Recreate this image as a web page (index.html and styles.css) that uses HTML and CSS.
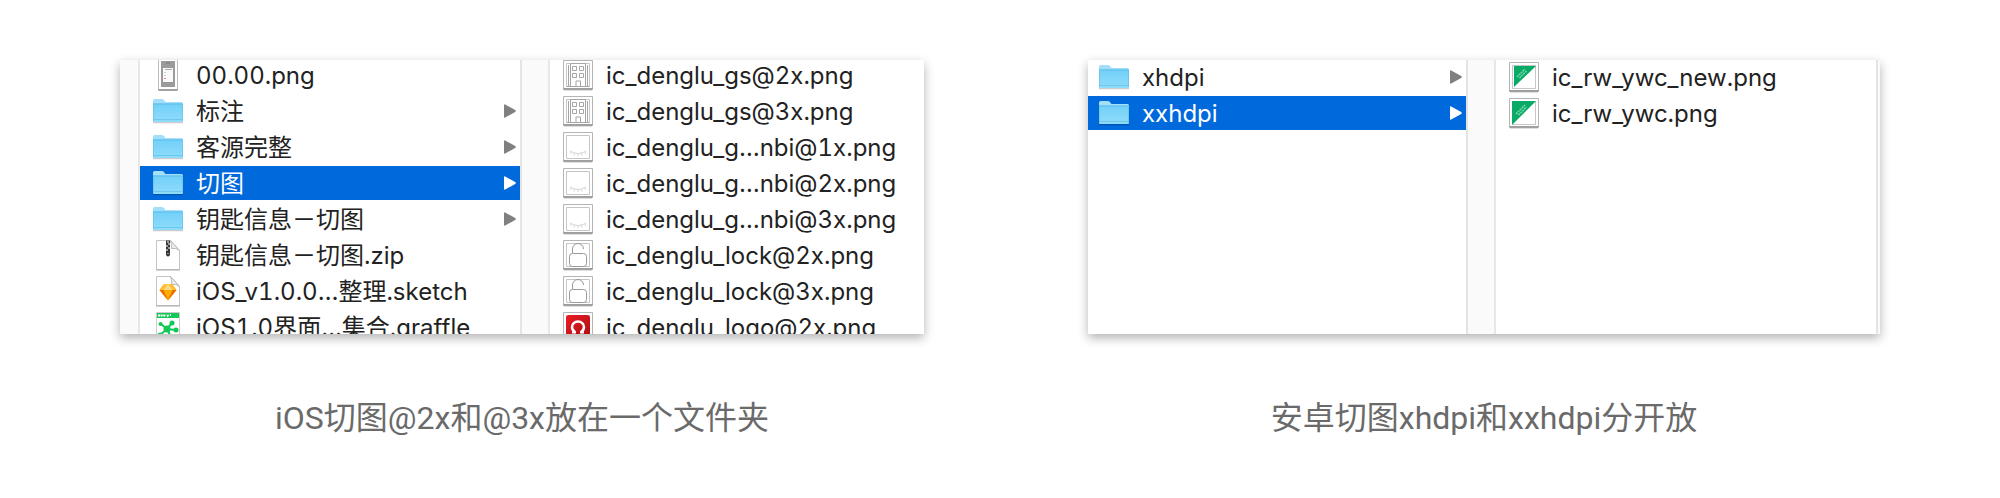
FILE: index.html
```html
<!DOCTYPE html>
<html lang="zh-CN">
<head>
    <meta charset="UTF-8">
    <title>切图</title>
    <link rel="stylesheet" href="styles.css">
</head>
<body>
<!-- icons -->
<svg class="sprite" aria-hidden="true">
    <defs>
        <linearGradient id="folderFill" x1="0" y1="0" x2="0" y2="1">
            <stop offset="0" stop-color="#72d0f8"/>
            <stop offset="1" stop-color="#8fdcfb"/>
        </linearGradient>
        <linearGradient id="redFill" x1="0" y1="0" x2="1" y2="1">
            <stop offset="0" stop-color="#ec1c24"/>
            <stop offset="1" stop-color="#a80f14"/>
        </linearGradient>
        <clipPath id="ribbon"><path d="M4 4h24L4 28z"/></clipPath>
    </defs>
    <symbol id="folder" viewBox="0 0 32 32">
        <path d="M1 27.500h30" stroke="#000" stroke-opacity=".2" stroke-width="1.500"/>
        <path d="M1 5.500Q1 4 2.500 4H10q1 0 1.700.8L13.500 7H29.500Q31 7 31 8.500V12H1z" fill="#a3dffa"/>
        <path d="M1 9.500Q1 8.500 2 8.500H30Q31 8.500 31 9.500V26Q31 27 30 27H2Q1 27 1 26z" fill="url(#folderFill)"/>
        <path d="M1.500 9h29" stroke="#5bbde8" stroke-width="1"/>
        <path d="M1.500 24.500h29" stroke="#67bfe3" stroke-width="1" opacity=".7"/>
        <path d="M1.500 8v18M30.500 9v17" stroke="#64bfe6" stroke-width="1" opacity=".6"/>
    </symbol>
    <symbol id="page" viewBox="0 0 32 32">
        <path d="M4.500 1.500H18.500L27.500 11.500V30.500H4.500z" fill="#fff" stroke="#c4c4c4"/>
        <path d="M4 31h24" stroke="#aaa"/>
        <path d="M18.500 1.500Q20.500 7 19.500 9.500Q24 8.500 27.500 11.500z" fill="#eee" stroke="#bbb"/>
    </symbol>
    <symbol id="zip" viewBox="0 0 32 32">
        <use href="#page"/>
        <path d="M14 1.500h4v13q0 3-2 3t-2-3z" fill="#333"/>
        <path d="M15 3h2M16 5h2M14 7h2M16 9h2M14 11h2M15.500 14.500h1" stroke="#fff"/>
    </symbol>
    <symbol id="sketch" viewBox="0 0 32 32">
        <use href="#page"/>
        <path d="M11.500 9.500h9L24.500 15 16 25.500 7.500 15z" fill="#fdad00"/>
        <path d="M11.500 9.500L16 9l4.500.5L24.500 15h-17z" fill="#fdbf2d"/>
        <path d="M16 9l4.500 6h-9z" fill="#fed98a"/>
        <path d="M7.500 15h4L16 25.500zM24.500 15h-4L16 25.500z" fill="#ea6c00"/>
    </symbol>
    <symbol id="graffle" viewBox="0 0 32 32">
        <path d="M4.500 1.500h23v30h-23z" fill="#fff" stroke="#ccc"/>
        <path d="M5 2h22v5H5z" fill="#12c957"/>
        <path d="M6 4.500h8M15 5.500l2-2M18 4h1" stroke="#fff" stroke-width="2" stroke-dasharray="2 .6"/>
        <path d="M15 18L9 13M15 18l5-6M15 18l9 1M15 18l-7 6M15 18l4 8" stroke="#12c957" stroke-width="2"/>
        <circle cx="15" cy="18" r="3.500" fill="#12c957"/>
        <circle cx="8.500" cy="13" r="2" fill="#12c957"/>
        <circle cx="20" cy="12" r="2.500" fill="#12c957"/>
        <circle cx="24" cy="19" r="2.500" fill="#12c957"/>
        <circle cx="8" cy="24" r="2.500" fill="#12c957"/>
        <circle cx="19" cy="26" r="2" fill="#12c957"/>
    </symbol>
    <symbol id="phone" viewBox="0 0 32 32">
        <path d="M7 0h18v31H7z" fill="#fff"/>
        <path d="M6.500 0v31h19V0" fill="none" stroke="#bbb"/>
        <path d="M6.500 31h19" stroke="#8c8c8c" stroke-width="1.500"/>
        <path d="M9 2h14v26H9z" fill="#9b9b9b"/>
        <path d="M14 4h4" stroke="#777"/>
        <path d="M11 9h10v14H11z" fill="#fafafa"/>
        <path d="M13 10.500h7" stroke="#aaa"/>
        <path d="M12 13.500h2M12 16.500h2" stroke="#ccc"/>
        <path d="M12 19.500h2" stroke="#e88"/>
    </symbol>
    <symbol id="frame" viewBox="0 0 32 32">
        <path d="M2 30.500h28" stroke="#000" stroke-opacity=".25" stroke-width="2"/>
        <path d="M1.500 1.500h29v28h-29z" fill="#fff" stroke="#b5b5b5"/>
        <path d="M1 30h30" stroke="#858585"/>
        <path d="M4.500 4.500h23v23h-23z" fill="none" stroke="#c6c6c6"/>
    </symbol>
    <symbol id="building" viewBox="0 0 32 32">
        <use href="#frame"/>
        <g fill="none" stroke="#a5a5a5">
            <path d="M8.500 27V4.500h15V27M6.500 6v21M25.500 6v21M4.500 27.500h23"/>
            <path d="M10.500 7.500h4v4h-4zM17.500 7.500h4v4h-4zM10.500 14.500h4v4h-4zM17.500 14.500h4v4h-4zM14 27v-5h4.500v5"/>
        </g>
    </symbol>
    <symbol id="eye" viewBox="0 0 32 32">
        <use href="#frame"/>
        <path d="M8 20q8 5 16 0M9.500 21l-1.500 2M12.500 22l-.5 2.500M16 22.500v2.500M19.500 22l.5 2.500M22.500 21l1.500 2" fill="none" stroke="#d6d6d6"/>
    </symbol>
    <symbol id="lock" viewBox="0 0 32 32">
        <use href="#frame"/>
        <rect x="7.500" y="14.500" width="17" height="13" rx="3" fill="#fff" stroke="#999"/>
        <path d="M10.500 14V10a5.500 5.500 0 0 1 11 0" fill="none" stroke="#999"/>
    </symbol>
    <symbol id="logo" viewBox="0 0 32 32">
        <use href="#frame"/>
        <rect x="4" y="4" width="24" height="24" rx="3" fill="url(#redFill)"/>
        <path d="M13.500 21.500Q10 19.500 10 16a6 5.500 0 0 1 12 0q0 3.500-3.500 5.500" fill="none" stroke="#fff" stroke-width="2.500"/>
        <path d="M10 21.500h4M18 21.500h4" stroke="#fff" stroke-width="2"/>
    </symbol>
    <symbol id="corner" viewBox="0 0 32 32">
        <use href="#frame"/>
        <path d="M4 4h24L4 28z" fill="#08ab66"/>
        <path d="M8 17l9-9M10.500 18l8-8" stroke="#7fd6b1" stroke-width="1.500" stroke-dasharray="2 .7" clip-path="url(#ribbon)"/>
    </symbol>
    <symbol id="cornerNew" viewBox="0 0 32 32">
        <use href="#frame"/>
        <path d="M6 5h22L6 26z" fill="#08ab66"/>
        <path d="M9 16l8-8M11.500 17l7-7" stroke="#7fd6b1" stroke-width="1.500" stroke-dasharray="2 .7" clip-path="url(#ribbon)"/>
    </symbol>
    <symbol id="arrow" viewBox="0 0 12 14">
        <path d="M0 1.200Q0 0 1.200.5L11.200 6q1.200 1 0 2L1.200 13.500Q0 14 0 12.800z" fill="currentColor"/>
    </symbol>
</svg>

<div class="container">
    <figure class="box">
        <div class="finder">
            <div class="gutter"></div>
            <ul class="col cut">
                <li><a href="#"><svg class="icon"><use href="#phone"/></svg><span class="name">00.00.png</span></a></li>
                <li><a href="#"><svg class="icon"><use href="#folder"/></svg><span class="name">标注</span><svg class="arrow"><use href="#arrow"/></svg></a></li>
                <li><a href="#"><svg class="icon"><use href="#folder"/></svg><span class="name">客源完整</span><svg class="arrow"><use href="#arrow"/></svg></a></li>
                <li><a href="#" class="selected"><svg class="icon"><use href="#folder"/></svg><span class="name">切图</span><svg class="arrow"><use href="#arrow"/></svg></a></li>
                <li><a href="#"><svg class="icon"><use href="#folder"/></svg><span class="name">钥匙信息－切图</span><svg class="arrow"><use href="#arrow"/></svg></a></li>
                <li><a href="#"><svg class="icon"><use href="#zip"/></svg><span class="name">钥匙信息－切图.zip</span></a></li>
                <li><a href="#"><svg class="icon"><use href="#sketch"/></svg><span class="name">iOS_v1.0.0…整理.sketch</span></a></li>
                <li><a href="#"><svg class="icon"><use href="#graffle"/></svg><span class="name">iOS1.0界面…集合.graffle</span></a></li>
            </ul>
            <div class="gutter wide"></div>
            <ul class="col files cut">
                <li><a href="#"><svg class="icon"><use href="#building"/></svg><span class="name">ic_denglu_gs@2x.png</span></a></li>
                <li><a href="#"><svg class="icon"><use href="#building"/></svg><span class="name">ic_denglu_gs@3x.png</span></a></li>
                <li><a href="#"><svg class="icon"><use href="#eye"/></svg><span class="name">ic_denglu_g…nbi@1x.png</span></a></li>
                <li><a href="#"><svg class="icon"><use href="#eye"/></svg><span class="name">ic_denglu_g…nbi@2x.png</span></a></li>
                <li><a href="#"><svg class="icon"><use href="#eye"/></svg><span class="name">ic_denglu_g…nbi@3x.png</span></a></li>
                <li><a href="#"><svg class="icon"><use href="#lock"/></svg><span class="name">ic_denglu_lock@2x.png</span></a></li>
                <li><a href="#"><svg class="icon"><use href="#lock"/></svg><span class="name">ic_denglu_lock@3x.png</span></a></li>
                <li><a href="#"><svg class="icon"><use href="#logo"/></svg><span class="name">ic_denglu_logo@2x.png</span></a></li>
            </ul>
        </div>
        <figcaption>iOS切图@2x和@3x放在一个文件夹</figcaption>
    </figure>
    <figure class="box">
        <div class="finder">
            <ul class="col first">
                <li><a href="#"><svg class="icon"><use href="#folder"/></svg><span class="name">xhdpi</span><svg class="arrow"><use href="#arrow"/></svg></a></li>
                <li><a href="#" class="selected"><svg class="icon"><use href="#folder"/></svg><span class="name">xxhdpi</span><svg class="arrow"><use href="#arrow"/></svg></a></li>
            </ul>
            <div class="gutter wide"></div>
            <ul class="col">
                <li><a href="#"><svg class="icon"><use href="#cornerNew"/></svg><span class="name">ic_rw_ywc_new.png</span></a></li>
                <li><a href="#"><svg class="icon"><use href="#corner"/></svg><span class="name">ic_rw_ywc.png</span></a></li>
            </ul>
            <div class="gutter last"></div>
        </div>
        <figcaption>安卓切图xhdpi和xxhdpi分开放</figcaption>
    </figure>
</div>
</body>
</html>
```

FILE: styles.css
```css
*{
    margin: 0;
    padding: 0;
    box-sizing: border-box;
}
body{
    background: #fff;
    font-family: Inter, "Noto Sans CJK SC", sans-serif;
}
ul{
    list-style: none;
}
.sprite{
    display: block;
    width: 0;
    height: 0;
}
.container{
    display: grid;
    grid-template-columns: 804fr 792fr;
    gap: 164px;
    padding: 60px 120px 0;
}
.finder{
    display: flex;
    height: 274px;
    overflow: hidden;
    background: #fff;
    box-shadow: 0 4px 10px rgba(0,0,0,.3);
}
.gutter{
    flex: none;
    width: 20px;
    background: #fafafa;
    border-right: 2px solid #e8e8e8;
}
.gutter.wide{
    width: 30px;
    border-left: 2px solid #e4e4e4;
}
.gutter.last{
    width: 4px;
    border-left: 2px solid #e4e4e4;
    border-right: 0;
}
.col{
    flex: 380;
    min-width: 0;
}
.col.first{
    flex: 378;
}
.col.files{
    flex: 374;
}
/* list scrolled a little, first row is cut */
.col.cut{
    margin-top: -2px;
}
.col li{
    margin-bottom: 2px;
}
.col a{
    display: flex;
    align-items: center;
    height: 34px;
    padding: 0 4px 0 12px;
    color: #222;
    font-size: 24px;
    font-variant-numeric: tabular-nums;
    line-height: 32px;
    white-space: nowrap;
    text-decoration: none;
}
.col.first a{
    padding-left: 10px;
}
.col a.selected{
    background: #0069dc;
    color: #fff;
}
.icon{
    flex: none;
    width: 32px;
    height: 32px;
    margin-right: 12px;
}
.name{
    flex: 1;
    padding-top: 2px;
}
.arrow{
    flex: none;
    width: 12px;
    height: 14px;
    color: #808080;
}
.selected .arrow{
    color: #fff;
}
figcaption{
    margin-top: 60px;
    color: #6a6a6a;
    font-family: Roboto, "Noto Sans CJK SC", sans-serif;
    font-size: 32px;
    line-height: 48px;
    text-align: center;
}
```
